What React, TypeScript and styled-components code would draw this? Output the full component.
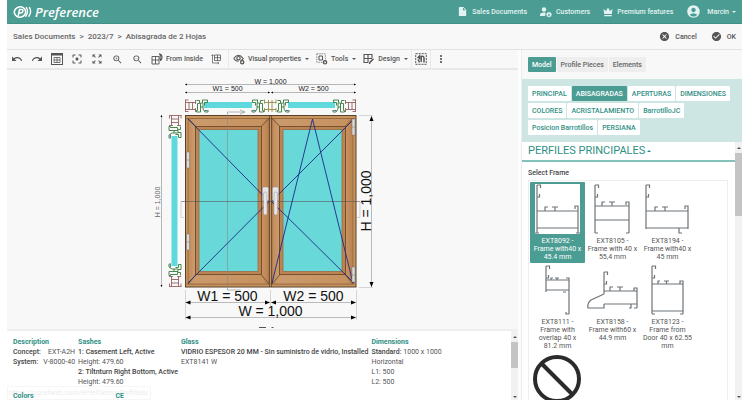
import React from 'react';
import styled, { createGlobalStyle, css } from 'styled-components';
import {
  MdUndo, MdRedo, MdFilterCenterFocus, MdZoomOutMap, MdZoomIn, MdZoomOut,
  MdInsertDriveFile, MdAccountCircle, MdCancel, MdCheckCircle, MdMoreVert,
} from 'react-icons/md';

const teal = '#4b9d93';
const tealText = '#2f8f84';

const GlobalStyle = createGlobalStyle`
  * { box-sizing: border-box; }
  body { margin: 0; background: #fff; font-family: Roboto, sans-serif; color: #555; }
  button { font: inherit; color: inherit; border: 0; background: none; padding: 0; margin: 0; cursor: pointer; }
  a { color: inherit; text-decoration: none; }
  h2, p, ul, ol, dl, dd { margin: 0; padding: 0; font: inherit; list-style: none; }
  svg { display: block; flex: none; }
`;

const Page = styled.div`
  height: 100vh;
  display: flex;
  flex-direction: column;
  margin: 0 8px 0 7px;
  overflow: hidden;
  background: #f8f8f8;
`;

const Header = styled.header`
  flex: none;
  display: flex;
  align-items: center;
  justify-content: space-between;
  height: 24px;
  padding: 0 6px;
  background: ${teal};
  border-bottom: 1px solid #3f9086;
  color: #fff;
`;

const Brand = styled.a`
  display: flex;
  align-items: center;
  gap: 2px;
  font: italic 600 13px/16px 'Open Sans', sans-serif;
`;

const Nav = styled.nav`
  display: flex;
  align-items: center;
  gap: 13px;
  font-size: 7px;
  font-weight: 500;
  color: #e4f3f1;
`;

const NavLink = styled.a`
  display: flex;
  align-items: center;
  gap: 4px;
`;

const AccountButton = styled.button`
  display: flex;
  align-items: center;
  gap: 6px;
`;

const AccountName = styled.span`
  display: flex;
  align-items: center;
  gap: 2px;
`;

const CrumbBar = styled.div`
  flex: none;
  display: flex;
  align-items: center;
  justify-content: space-between;
  height: 26px;
  padding: 0 6px;
  border-bottom: 1px solid #e2e2e2;
`;

const Crumbs = styled.ol`
  display: flex;
  gap: 4px;
  font-size: 8px;
  font-weight: 500;
  color: #666;
`;

const Actions = styled.div`
  display: flex;
  gap: 14px;
  font-size: 7px;
  font-weight: 500;
`;

const ActionButton = styled.button`
  display: flex;
  align-items: center;
  gap: 5px;
`;

const Body = styled.main`
  flex: 1;
  min-height: 0;
  display: grid;
  grid-template-columns: minmax(0, 1fr) minmax(221px, 30%);
`;

const Left = styled.div`
  display: flex;
  flex-direction: column;
  min-width: 0;
  min-height: 0;
  border-right: 3px solid #fdfdfd;
`;

const Toolbar = styled.div`
  flex: none;
  display: flex;
  align-items: stretch;
  height: 20px;
  border-bottom: 2px solid #e8e8e8;
  font-size: 7px;
  font-weight: 500;
  color: #555;
`;

const ToolButton = styled.button<{ $wide?: boolean; $framed?: boolean; $split?: boolean }>`
  flex: none;
  display: flex;
  align-items: center;
  justify-content: center;
  gap: 3px;
  ${(p) => (p.$wide ? css`padding: 0 3px 0 4px;` : css`width: 20px;`)}
  ${(p) => p.$split && css`border-left: 1px solid #eaeaea; margin-left: 2px;`}
  ${(p) => p.$framed && css`border: solid #eaeaea; border-width: 0 1px;`}
`;

const Caret = styled.span<{ $up?: boolean }>`
  width: 0;
  height: 0;
  margin-left: 1px;
  border: solid transparent;
  border-width: 2px 2px 0;
  border-top-color: currentColor;
  ${(p) => p.$up && css`border-width: 0 2px 2px; border-bottom-color: currentColor;`}
`;

const Canvas = styled.section`
  flex: 1;
  min-height: 0;
  display: flex;
  justify-content: center;
  overflow: hidden;
`;

const Details = styled.section`
  flex: none;
  display: flex;
  height: 71px;
  border-top: 2px solid #efefef;
  background: #fff;
`;

const DetailBody = styled.div`
  position: relative;
  flex: 1;
  min-width: 0;
  overflow: hidden;
  padding: 6px 6px 0;
  font-size: 7px;
  line-height: 10px;
  white-space: nowrap;
`;

const DetailRow = styled.div`
  display: flex;
  gap: 3px;
`;

const LowerRow = styled.div`
  position: relative;
  display: flex;
  gap: 82px;
  margin-top: 4px;
`;

const DetailTitle = styled.h2`
  color: ${tealText};
  font-weight: 700;
`;

const Strong = styled.strong`
  font-weight: 500;
  color: #444;
`;

const Spread = styled.p`
  display: flex;
  justify-content: space-between;
  gap: 5px;
`;

const StatusUrl = styled.div`
  position: absolute;
  left: 0;
  bottom: 0;
  padding: 1px 1px 1px;
  border: 1px solid #f6f6f6;
  color: #ececec;
`;

const Right = styled.aside`
  display: flex;
  flex-direction: column;
  min-width: 0;
  min-height: 0;
  border-left: 1px solid #ececec;
`;

const Tabs = styled.div`
  flex: none;
  display: flex;
  gap: 1px;
  padding: 7px 6px;
`;

const Tab = styled.button<{ $active?: boolean }>`
  height: 15px;
  padding: 0 4px;
  border-radius: 1px;
  font-size: 7px;
  font-weight: 500;
  background: ${(p) => (p.$active ? teal : '#eee')};
  color: ${(p) => (p.$active ? '#fff' : '#666')};
`;

const Chips = styled.div`
  flex: none;
  display: flex;
  flex-wrap: wrap;
  gap: 2px 1px;
  padding: 7px 6px;
  background: #cde6e3;
`;

const Chip = styled.button<{ $active?: boolean }>`
  height: 15px;
  padding: 0 4px;
  border-radius: 1px;
  font-size: 7px;
  font-weight: 500;
  background: ${(p) => (p.$active ? teal : '#fff')};
  color: ${(p) => (p.$active ? '#fff' : tealText)};
`;

const PanelScroll = styled.div`
  flex: 1;
  min-height: 0;
  display: flex;
  background: #fff;
`;

const PanelContent = styled.div`
  flex: 1;
  min-width: 0;
  overflow: hidden;
`;

const SectionTitle = styled.button`
  display: flex;
  align-items: center;
  gap: 1px;
  width: 100%;
  height: 20px;
  padding: 0 6px;
  border-bottom: 2px solid #84c1b9;
  font-size: 11px;
  line-height: 18px;
  color: ${tealText};
`;

const FieldLabel = styled.p`
  padding: 7px 6px 2px;
  font-size: 7px;
  line-height: 9px;
  font-weight: 500;
  color: #444;
`;

const FrameList = styled.div`
  display: grid;
  grid-template-columns: repeat(auto-fill, 55px);
  margin: 0 7px 0 6px;
  padding: 1px;
  border: 1px solid #eee;
`;

const FrameItem = styled.button<{ $active?: boolean }>`
  display: flex;
  flex-direction: column;
  align-items: center;
  gap: 2px;
  padding: 1px 0 2px;
  border-radius: 1px;
  font-size: 7px;
  line-height: 8px;
  background: ${(p) => (p.$active ? teal : 'transparent')};
  color: ${(p) => (p.$active ? '#fff' : '#555')};
`;

const FrameName = styled.span`
  width: 50px;
`;

const Scrollbar = styled.div`
  flex: none;
  width: 7px;
  display: flex;
  flex-direction: column;
  align-items: center;
  gap: 4px;
  padding: 5px 0 2px;
  background: #f1f1f1;
  color: #555;
`;

const Thumb = styled.div<{ $size: 'short' | 'long' }>`
  width: 100%;
  height: ${(p) => (p.$size === 'short' ? '26px' : '63px')};
  margin-bottom: auto;
  background: #c4c4c4;
`;

const Ico = ({ children, w = 12 }: { children: React.ReactNode; w?: number }) => (
  <svg width={w} height="12" viewBox={`0 0 ${w} 12`} fill="none" stroke="currentColor" strokeWidth="1" aria-hidden="true">{children}</svg>
);

const LogoMark = () => (
  <svg width="20" height="14" viewBox="0 0 20 14" fill="none" aria-hidden="true">
    <ellipse cx="7" cy="7" rx="5.7" ry="5.2" stroke="#fff" strokeWidth="1.6" transform="rotate(-12 7 7)" />
    <path d="M5.2 11 6.5 4.5h2q1.7.2 1.4 1.8-.4 1.7-2.2 1.7H6.2" stroke="#fff" strokeWidth="1.5" />
    <path d="M13.2 2.2q3 4.8-.8 9.6M16.3 2.2q3 4.8-.8 9.6" stroke="#fff" strokeWidth="1.4" />
  </svg>
);

const CustomersIcon = () => (
  <Ico>
    <g fill="currentColor" stroke="none">
      <circle cx="4" cy="3.5" r="2.2" />
      <path d="M0 10V8.600q.2-2 4-2.200 1.200 0 1.800.3L5 10z" />
      <path d="m9 5.500.5 1.100 1.200-.3.3 1.200 1 .8-.8.900.1 1.300-1.300.1-1 .9-1-.9-1.300-.1.100-1.300-.8-.9 1-.8.3-1.200 1.200.3z" />
    </g>
    <circle cx="9" cy="9" r=".9" fill={teal} stroke="none" />
  </Ico>
);

const CrownIcon = () => (
  <Ico w={10}><path d="M1.200 8 .5 3 3 5l2-3.500L7 5l2.500-2-.7 5zM1.200 9h7.600v1.200H1.200z" fill="currentColor" stroke="none" /></Ico>
);

const WindowIcon = () => (
  <Ico>
    <rect x=".5" y=".5" width="11" height="11" />
    <path d="M.5 1.500h11" strokeWidth="2" />
    <path d="M3 4.500h6v5H3zM6 4.500v5M3 7h6" strokeWidth=".8" />
  </Ico>
);

const InsideIcon = () => (
  <Ico>
    <path d="M1 3.500h7v7.500H1zM4.500 3.500V11M1 7h7" strokeWidth=".9" />
    <path d="M8 .8q3 .3 3 3.500 0 2.500-2 3.400M9.300 2q-.6 3 .2 5" strokeWidth="1.200" />
  </Ico>
);

const SizeIcon = () => (
  <Ico w={10}>
    <path d="M3.500 2h6v5.500h-6zM6.500 2v5.500M3.500 4.700h6" strokeWidth=".8" />
    <path d="M1.500 2v8h6M.5 3l1-1.500 1 1.500M6.500 9l1.500 1-1.500 1" strokeWidth=".7" />
  </Ico>
);

const EyeIcon = () => (
  <Ico>
    <path d="M.7 5.500q4.500-6.500 9.500 0-1 1.600-2.500 2.300M.7 5.500q2 3 4.800 3" strokeWidth="1.200" />
    <circle cx="5.500" cy="5.200" r="1.700" strokeWidth="1.200" />
    <circle cx="9.200" cy="9.300" r="1.600" strokeWidth="1.300" />
  </Ico>
);

const ToolsIcon = () => (
  <Ico>
    <path d="M.8.800h8.500v8.500H.8z" strokeDasharray="1.500 1" strokeWidth=".7" />
    <path d="M3 3h3.500v4H3z" />
    <circle cx="9" cy="9.300" r="1.700" strokeWidth="1.200" />
  </Ico>
);

const DesignIcon = () => (
  <Ico>
    <path d="M5 9.500H1v-8h8V5M5 1.500v8M1 5.500h8" strokeWidth="1.100" />
    <path d="m6.500 11 .3-1.600L10.500 5.700" strokeWidth="1.400" />
  </Ico>
);

const TouchIcon = () => (
  <Ico>
    <rect x=".7" y=".7" width="10.600" height="10.600" strokeDasharray="2 1" />
    <path d="M2.500 5 4.500 3v3.500M6.200 9V3.500q2.300-1 2.800 1.300V9.500M3 6.500l1.500 3" strokeWidth="1.500" />
  </Ico>
);

/* Cross-section of the outer frame: two flanges joined by a hollow chamber. */
const OuterProfile = () => (
  <g fill="#fff" stroke="#93605e" strokeWidth=".9">
    <path d="M.5.500v12.500M.5 3.500h10M.5 10.500h10M10.500 1v4M10.500 9v4M4 3.500v7M7.500 3.500v7M.5 1h3M.5 12.500h3" fill="none" />
  </g>
);

/* Cross-section of the sash, open on its right to hold the pane. */
const SashProfile = () => (
  <g fill="none" stroke="#35793a" strokeWidth=".9">
    <path d="M.5 1.500h3v3h-2v7h-1v1.500h4v-9h2v-3h5v2.500h-3v3M7 4v6l2 3h3v-2" />
    <path d="M4.500 8H7" />
    <path d="M8.500 11.500h3" stroke="#3a6c88" />
  </g>
);

const CentreProfile = () => (
  <path d="M.5.500v4M.5 9v4M12 .5v4M12 9v4M.5 3.500H12M.5 10.500H12M4.500 1v12M8 1v12" fill="none" stroke="#948a45" strokeWidth=".9" />
);

const FrameSection = () => (
  <>
    <OuterProfile />
    <g transform="translate(11 0)"><SashProfile /></g>
  </>
);

const sashes = [
  { left: 187, glass: 198, right: 268 },
  { left: 271, glass: 282, right: 352 },
];

const WindowDrawing = () => (
  <svg width="224" height="258" viewBox="150 70 224 258" fontFamily="'Liberation Sans', Arial, sans-serif" role="img" aria-label="Abisagrada de 2 Hojas">
    <defs>
      <linearGradient id="wood" x1="0" x2="1">
        <stop offset="0" stopColor="#c08a5a" />
        <stop offset=".08" stopColor="#cb9a6c" />
        <stop offset=".92" stopColor="#c6925f" />
        <stop offset="1" stopColor="#b98150" />
      </linearGradient>
      <marker id="dot" viewBox="0 0 6 6" refX="5" refY="3" markerWidth="6" markerHeight="6" markerUnits="userSpaceOnUse" orient="auto-start-reverse">
        <path d="M0 1 5 3 0 5z" />
      </marker>
      <marker id="tick" viewBox="0 0 4 4" refX="3" refY="2" markerWidth="3" markerHeight="3" markerUnits="userSpaceOnUse" orient="auto-start-reverse">
        <path d="M0 .5 3 2 0 3.500z" />
      </marker>
    </defs>

    <g stroke="#999" strokeWidth=".7" fill="none">
      <path d="M184 84.500H355" markerStart="url(#tick)" markerEnd="url(#tick)" />
      <path d="M184 92.500H269" markerStart="url(#tick)" markerEnd="url(#tick)" />
      <path d="M270 92.500H355" markerStart="url(#tick)" markerEnd="url(#tick)" />
      <path d="M160.500 115V287" markerStart="url(#tick)" markerEnd="url(#tick)" />
    </g>
    <g fontSize="7" textAnchor="middle" fill="#222">
      <text x="269.500" y="84">W = 1,000</text>
      <text x="226.500" y="91">W1 = 500</text>
      <text x="312.500" y="91">W2 = 500</text>
      <text transform="translate(159 202) rotate(-90)" fill="#666">H = 1,000</text>
    </g>

    <path d="M203 102h48v6h-48zM287 102h47v6h-47zM170.500 136h6v130h-6z" fill="#5fd9dc" />
    <g transform="translate(184 99)"><FrameSection /></g>
    <g transform="translate(355 99) scale(-1 1)"><FrameSection /></g>
    <g transform="translate(263 99) scale(-1 1)"><SashProfile /></g>
    <g transform="translate(263 99)"><CentreProfile /></g>
    <g transform="translate(276 99)"><SashProfile /></g>
    <g transform="translate(181 115) rotate(90)"><FrameSection /></g>
    <g transform="translate(181 287) rotate(90) scale(-1 1)"><FrameSection /></g>

    <rect x="184.500" y="115.500" width="170.500" height="171.500" fill="#c8955f" stroke="#5b4029" />
    <path d="M184.500 118.500H355M184.500 284H355" stroke="#986640" strokeWidth=".7" />
    {sashes.map(({ left, glass, right }) => (
      <g key={left}>
        <rect x={left} y="118.500" width={right - left} height="165.500" fill="url(#wood)" stroke="#8a5c38" strokeWidth=".6" />
        <path d={`M${left} 118.500 ${glass - 3} 126.500V274.500L${left} 284M${right} 118.500 ${glass + 62} 126.500V274.500L${right} 284`} fill="none" stroke="#4c3727" strokeWidth=".7" />
        <rect x={glass - 3.500} y="126.500" width="66" height="148" fill="#bd8350" stroke="#6d4a2f" strokeWidth=".9" />
        <rect x={glass} y="129.500" width="59" height="142" fill="#68d8d8" stroke="#9a6b45" strokeWidth=".8" />
      </g>
    ))}
    <path d="M268.500 115.500V287M270.500 115.500V287" stroke="#50382a" strokeWidth=".7" />

    <g fill="none" stroke="#555" strokeWidth=".6">
      <path d="M226.500 290V112H243M239 110l5 2-5 2M226.500 290h13" stroke="#888" />
      <path d="M180 201.500H359" />
      <path d="M180 201.500v16h3M359 201.500v16h-3" stroke="#bbb" />
    </g>
    <g fill="none" stroke="#1c2a8a" strokeWidth=".9">
      <path d="M187 119 268 201.500 187 283M353 119 270.500 201.500 353 283" />
      <path d="M271 283 311.500 119 352 283" />
    </g>
    <g fill="#d9dadd" stroke="#77706c" strokeWidth=".5">
      <rect x="185.500" y="152" width="3" height="16" /><rect x="185.500" y="234" width="3" height="16" />
      <rect x="351" y="119" width="3" height="16" /><rect x="351" y="267" width="3" height="15" />
      <path d="M185.500 160h3M185.500 242h3M351 127h3M351 275h3" />
    </g>
    <g fill="#e6e6ea" stroke="#98938f" strokeWidth=".5">
      <rect x="261.500" y="187" width="6" height="14" rx="1.500" /><rect x="262.500" y="192" width="3.500" height="23" rx="1.700" />
      <rect x="271.500" y="187" width="6" height="14" rx="1.500" /><rect x="273" y="192" width="3.500" height="23" rx="1.700" />
    </g>

    <g stroke="#aaa" strokeWidth=".8" fill="none">
      <path d="M184.500 290v30M269.500 290v16M355.500 290v30M358 115.500h14M358 287.500h14" stroke="#ccc" />
      <path d="M184.500 302.500H269" markerStart="url(#dot)" markerEnd="url(#dot)" />
      <path d="M270 302.500H355" markerStart="url(#dot)" markerEnd="url(#dot)" />
      <path d="M184.500 317.500H355" markerStart="url(#dot)" markerEnd="url(#dot)" />
      <path d="M370.500 116V287" markerStart="url(#dot)" markerEnd="url(#dot)" />
    </g>
    <g fontSize="14" textAnchor="middle" fill="#111">
      <text x="226.500" y="301">W1 = 500</text>
      <text x="312.500" y="301">W2 = 500</text>
      <text x="269.500" y="316">W = 1,000</text>
      <text transform="translate(369.500 201) rotate(-90)">H = 1,000</text>
    </g>
    <path d="M258 327.500h7M270.500 327.500h2" stroke="#555" />
  </svg>
);

const hooks = (x: number, top: number) => `M${x} ${top + 12}h2.500v-3M${x} ${top}h3.500v3`;
const clips = (x: number, y: number) => `M${x} ${y}v-4h3M${x + 7} ${y - 4}h6M${x + 10} ${y - 4}v4`;

const frames: { name: string; path: string; white?: boolean }[] = [
  { name: 'EXT8092 - Frame with40 x 45.4 mm', white: true, path: `M7 50V2M7 28h41M7 45h41M48 50V23h-3v3M5 50h4M46 50h4${hooks(7, 2)}${clips(15, 28)}` },
  { name: 'EXT8105 - Frame with 40 x 55,4 mm', path: `M10 50V2M10 23h34M10 37h34M44 50V19h-3v3M10 50h3M41 50h3${hooks(10, 2)}${clips(17, 23)}` },
  { name: 'EXT8194 - Frame with40 x 45 mm', path: `M6 46V2M6 28h42M6 45h42M48 46V23h-3v3M39 45v5h3${hooks(6, 2)}${clips(15, 28)}` },
  { name: 'EXT8111 - Frame with overlap 40 x 81.2 mm', path: `M16 28V2M16 16h23M16 26h23M39 50V14h-3M39 50h-3v-2M36 28h-3${hooks(16, 2)}M21 16v-2h2M25 14h4M27 14v2` },
  { name: 'EXT8158 - Frame with60 x 44.9 mm', path: `M19 30V8M19 27h33M19 40h33M52 44V24h-3v3M52 44h-3M46 40v4h-2M19 30 6 36q-4 3-3 8h16v-4${hooks(19, 8)}${clips(25, 27)}` },
  { name: 'EXT8123 - Frame from Door 40 x 62.55 mm', path: `M12 50V2M12 20h31M12 47h31M43 50V17h-3v3M12 50h3M40 50h3${hooks(12, 2)}M18 20v-3h2M24 17h5M26.500 17v3` },
];

const chips = ['PRINCIPAL', 'ABISAGRADAS', 'APERTURAS', 'DIMENSIONES', 'COLORES', 'ACRISTALAMIENTO', 'BarrotilloJC', 'Posicion Barrotillos', 'PERSIANA'];

export default function App() {
  return (
    <>
      <GlobalStyle />
      <Page>
        <Header>
          <Brand href="#"><LogoMark />Preference</Brand>
          <Nav>
            <NavLink href="#"><MdInsertDriveFile size={11} />Sales Documents</NavLink>
            <NavLink href="#"><CustomersIcon />Customers</NavLink>
            <NavLink href="#"><CrownIcon />Premium features</NavLink>
            <AccountButton><MdAccountCircle size={15} /><AccountName>Marcin <Caret /></AccountName></AccountButton>
          </Nav>
        </Header>
        <CrumbBar>
          <Crumbs>
            <li><a href="#">Sales Documents</a></li><li>&gt;</li>
            <li><a href="#">2023/7</a></li><li>&gt;</li>
            <li>Abisagrada de 2 Hojas</li>
          </Crumbs>
          <Actions>
            <ActionButton><MdCancel size={11} />Cancel</ActionButton>
            <ActionButton><MdCheckCircle size={11} />OK</ActionButton>
          </Actions>
        </CrumbBar>
        <Body>
          <Left>
            <Toolbar role="toolbar">
              <ToolButton aria-label="Undo"><MdUndo size={12} /></ToolButton>
              <ToolButton aria-label="Redo"><MdRedo size={12} /></ToolButton>
              <ToolButton aria-label="Window"><WindowIcon /></ToolButton>
              <ToolButton aria-label="Center"><MdFilterCenterFocus size={12} /></ToolButton>
              <ToolButton aria-label="Fit"><MdZoomOutMap size={12} /></ToolButton>
              <ToolButton aria-label="Zoom in"><MdZoomIn size={11} /></ToolButton>
              <ToolButton aria-label="Zoom out"><MdZoomOut size={11} /></ToolButton>
              <ToolButton $wide><InsideIcon />From Inside</ToolButton>
              <ToolButton aria-label="Size"><SizeIcon /></ToolButton>
              <ToolButton $wide $split><EyeIcon />Visual properties <Caret /></ToolButton>
              <ToolButton $wide><ToolsIcon />Tools <Caret /></ToolButton>
              <ToolButton $wide><DesignIcon />Design <Caret /></ToolButton>
              <ToolButton $framed aria-label="Touch mode"><TouchIcon /></ToolButton>
              <ToolButton aria-label="More"><MdMoreVert size={12} /></ToolButton>
            </Toolbar>
            <Canvas><WindowDrawing /></Canvas>
            <Details>
              <DetailBody>
                <DetailRow>
                  <div>
                    <DetailTitle>Description</DetailTitle>
                    <Spread><Strong>Concept:</Strong><span>EXT-A2H</span></Spread>
                    <Spread><Strong>System:</Strong><span>V-8000-40</span></Spread>
                  </div>
                  <div>
                    <DetailTitle>Sashes</DetailTitle>
                    <p><Strong>1: Casement Left, Active</Strong></p>
                    <p>Height: 479.60</p>
                    <p><Strong>2: Tiltnturn Right Bottom, Active</Strong></p>
                    <p>Height: 479.60</p>
                  </div>
                  <div>
                    <DetailTitle>Glass</DetailTitle>
                    <p><Strong>VIDRIO ESPESOR 20 MM - Sin suministro de vidrio, Installed</Strong></p>
                    <p>EXT8141 W</p>
                  </div>
                  <div>
                    <DetailTitle>Dimensions</DetailTitle>
                    <p><Strong>Standard:</Strong> 1000 x 1000</p>
                    <p>Horizontal</p>
                    <p>L1: 500</p>
                    <p>L2: 500</p>
                  </div>
                </DetailRow>
                <StatusUrl>https://q.prefweb.com/ePrefDemo/PrefWeb/</StatusUrl>
                <LowerRow>
                  <DetailTitle>Colors</DetailTitle>
                  <DetailTitle>CE</DetailTitle>
                </LowerRow>
              </DetailBody>
              <Scrollbar><Caret $up /><Thumb $size="short" /><Caret /></Scrollbar>
            </Details>
          </Left>
          <Right>
            <Tabs>
              <Tab $active>Model</Tab>
              <Tab>Profile Pieces</Tab>
              <Tab>Elements</Tab>
            </Tabs>
            <Chips>
              {chips.map((c) => <Chip key={c} $active={c === 'ABISAGRADAS'}>{c}</Chip>)}
            </Chips>
            <PanelScroll>
              <PanelContent>
                <SectionTitle>PERFILES PRINCIPALES <Caret $up /></SectionTitle>
                <FieldLabel id="frame-label">Select Frame</FieldLabel>
                <FrameList role="group" aria-labelledby="frame-label">
                  {frames.map((f, i) => (
                    <FrameItem key={f.name} $active={i === 0}>
                      <svg width="55" height="52" viewBox="0 0 55 52" fill="none" stroke="#6f7479" strokeWidth="1.200">
                        {f.white && <rect x="5" y="1" width="45" height="50" fill="#fff" stroke="none" />}
                        <path d={f.path} />
                      </svg>
                      <FrameName>{f.name}</FrameName>
                    </FrameItem>
                  ))}
                  <FrameItem aria-label="No frame">
                    <svg width="55" height="52" viewBox="0 0 55 52" fill="none" stroke="#2b2b2b" strokeWidth="4">
                      <circle cx="27" cy="26" r="22" /><path d="m11.500 10.500 31 31" />
                    </svg>
                  </FrameItem>
                </FrameList>
              </PanelContent>
              <Scrollbar><Caret $up /><Thumb $size="long" /><Caret /></Scrollbar>
            </PanelScroll>
          </Right>
        </Body>
      </Page>
    </>
  );
}
